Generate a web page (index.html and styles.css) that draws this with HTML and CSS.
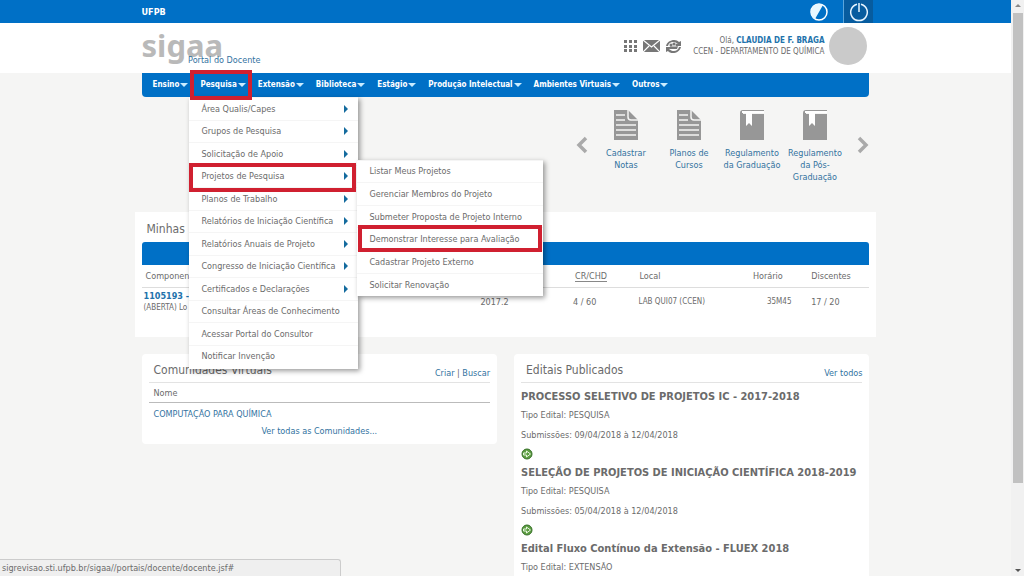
FILE: index.html
```html
<!DOCTYPE html>
<html lang="pt-BR">
<head>
<meta charset="utf-8">
<title>SIGAA - Portal do Docente</title>
<link rel="stylesheet" href="styles.css">
</head>
<body>
<div class="window">
<div class="page">
  <div class="topbar">
    <div class="wrap topbar-inner">
      <strong>UFPB</strong>
      <div class="topbar-actions">
        <button class="contrast" aria-label="Contraste"><svg width="20" height="20" viewBox="0 0 20 20"><circle cx="10" cy="10" r="8" fill="none" stroke="#fff" stroke-width="1.5"/><path d="M14 3A8 8 0 1 0 6 17z" fill="#e8f7ff"/></svg></button>
        <button class="power" aria-label="Sair"><svg width="22" height="22" viewBox="0 0 22 22" fill="none" stroke="#e8f5ff" stroke-width="1.5"><path d="M9 3.2A8.3 8.3 0 1 0 13 3.2M11 2v9"/></svg></button>
      </div>
    </div>
  </div>
  <header class="header">
    <div class="wrap header-inner">
      <div class="brand"><span class="logo">sigaa</span><a href="#" class="portal">Portal do Docente</a></div>
      <div class="user">
        <svg width="14" height="14" viewBox="0 0 14 14" fill="#777"><path d="M0 1h3v3H0zM5 1h3v3H5zM10 1h3v3h-3zM0 6h3v3H0zM5 6h3v3H5zM10 6h3v3h-3zM0 10h3v3H0zM5 10h3v3H5zM10 10h3v3h-3z"/></svg>
        <svg width="17" height="14" viewBox="0 0 17 14"><path d="M0 1h17v12H0z" fill="#777"/><path d="M0 1l8.500 7L17 1M0 13l6-6M17 13l-6-6" fill="none" stroke="#fff" stroke-width="1.200"/></svg>
        <svg width="17" height="15" viewBox="0 0 17 15"><path d="M1 7C2 1 11-1 14 3l2-1v5h-5l2-2C10 2 4 2 3 7zM16 8c-1 6-10 8-13 4l-2 1V8h5l-2 2c3 3 9 3 10-2z" fill="#777"/><circle cx="6" cy="6" r="1.500" fill="#777"/><circle cx="9" cy="5" r="1.600" fill="#777"/><circle cx="12" cy="6" r="1.500" fill="#777"/><path d="M4 10l1-2.500h8L12 10z" fill="#777"/></svg>
        <div class="who"><div>Olá, <strong>CLAUDIA DE F. BRAGA</strong></div><div>CCEN - DEPARTAMENTO DE QUÍMICA</div></div>
        <span class="avatar"></span>
      </div>
    </div>
  </header>
  <div class="wrap">
    <nav class="menu">
      <ul class="menubar">
        <li><a href="#">Ensino</a></li>
        <li class="open"><a href="#">Pesquisa</a><span class="mark mark-top"></span>
          <ul class="drop drop-main">
            <li class="more"><a href="#">Área Qualis/Capes</a></li>
            <li class="more"><a href="#">Grupos de Pesquisa</a></li>
            <li class="more"><a href="#">Solicitação de Apoio</a></li>
            <li class="more"><a href="#">Projetos de Pesquisa</a><span class="mark mark-row"></span>
              <ul class="drop drop-sub">
                <li><a href="#">Listar Meus Projetos</a></li>
                <li><a href="#">Gerenciar Membros do Projeto</a></li>
                <li><a href="#">Submeter Proposta de Projeto Interno</a></li>
                <li><a href="#">Demonstrar Interesse para Avaliação</a><span class="mark mark-sub"></span></li>
                <li><a href="#">Cadastrar Projeto Externo</a></li>
                <li><a href="#">Solicitar Renovação</a></li>
              </ul>
            </li>
            <li class="more"><a href="#">Planos de Trabalho</a></li>
            <li class="more"><a href="#">Relatórios de Iniciação Científica</a></li>
            <li class="more"><a href="#">Relatórios Anuais de Projeto</a></li>
            <li class="more"><a href="#">Congresso de Iniciação Científica</a></li>
            <li class="more"><a href="#">Certificados e Declarações</a></li>
            <li><a href="#">Consultar Áreas de Conhecimento</a></li>
            <li><a href="#">Acessar Portal do Consultor</a></li>
            <li><a href="#">Notificar Invenção</a></li>
          </ul>
        </li>
        <li><a href="#">Extensão</a></li>
        <li><a href="#">Biblioteca</a></li>
        <li><a href="#">Estágio</a></li>
        <li><a href="#">Produção Intelectual</a></li>
        <li><a href="#">Ambientes Virtuais</a></li>
        <li><a href="#">Outros</a></li>
      </ul>
    </nav>
    <div class="shortcuts">
      <button class="arrow arrow-prev" aria-label="Anterior"><svg width="12" height="18" viewBox="0 0 12 18"><path d="M10 2L3 9l7 7" fill="none" stroke="#aaa" stroke-width="3.500"/></svg></button>
      <a href="#"><svg width="26" height="32" viewBox="0 0 26 32"><path d="M1 1h14l10 10v20H1z" fill="#979797"/><path d="M15 1v7q0 3 3 3h7M3 6h9M3 11h9M3 16h20M3 21h20M3 26h20" fill="none" stroke="#f5f5f4" stroke-width="1.500"/></svg>Cadastrar Notas</a>
      <a href="#"><svg width="26" height="32" viewBox="0 0 26 32"><path d="M1 1h14l10 10v20H1z" fill="#979797"/><path d="M15 1v7q0 3 3 3h7M3 6h9M3 11h9M3 16h20M3 21h20M3 26h20" fill="none" stroke="#f5f5f4" stroke-width="1.500"/></svg>Planos de Cursos</a>
      <a href="#"><svg width="26" height="32" viewBox="0 0 26 32"><path d="M1 4q0-3 3-3h21v1H4v3h21v26H1z" fill="#979797"/><path d="M3 2h22v2H3z" fill="#fff"/><path d="M7 3h6v14l-3-3-3 3z" fill="#fff"/></svg>Regulamento da Graduação</a>
      <a href="#"><svg width="26" height="32" viewBox="0 0 26 32"><path d="M1 4q0-3 3-3h21v1H4v3h21v26H1z" fill="#979797"/><path d="M3 2h22v2H3z" fill="#fff"/><path d="M7 3h6v14l-3-3-3 3z" fill="#fff"/></svg>Regulamento da Pós-Graduação</a>
      <button class="arrow arrow-next" aria-label="Próximo"><svg width="12" height="18" viewBox="0 0 12 18"><path d="M2 2l7 7-7 7" fill="none" stroke="#aaa" stroke-width="3.500"/></svg></button>
    </div>
    <section class="classes">
      <h2>Minhas</h2>
      <div class="bluebar"></div>
      <table>
        <thead><tr><th class="c-comp">Componente</th><th class="c-year"></th><th class="c-cr"><span>CR/CHD</span></th><th class="c-local">Local</th><th class="c-time">Horário</th><th class="c-disc">Discentes</th></tr></thead>
        <tbody><tr><td class="comp"><a href="#">1105193 -</a><small>(ABERTA) Lo</small></td><td class="inset">2017.2</td><td>4 / 60</td><td class="tiny">LAB QUI07 (CCEN)</td><td class="tiny time">35M45</td><td>17 / 20</td></tr></tbody>
      </table>
    </section>
    <div class="columns">
      <section class="card communities">
        <div class="card-head"><h2>Comunidades Virtuais</h2><span><a href="#">Criar</a> | <a href="#">Buscar</a></span></div>
        <div class="subhead">Nome</div>
        <a href="#" class="community">COMPUTAÇÃO PARA QUÍMICA</a>
        <a href="#" class="all">Ver todas as Comunidades...</a>
      </section>
      <section class="card notices">
        <div class="card-head"><h2>Editais Publicados</h2><a href="#">Ver todos</a></div>
        <article><h3>PROCESSO SELETIVO DE PROJETOS IC - 2017-2018</h3><p>Tipo Edital: PESQUISA</p><p>Submissões: 09/04/2018 à 12/04/2018</p>
          <a href="#" class="go" aria-label="Abrir"><svg width="12" height="12" viewBox="0 0 12 12"><circle cx="6" cy="6" r="5" fill="#5d9d42" stroke="#356f26"/><path d="M2.500 5h3V3l4 3-4 3V7h-3z" fill="none" stroke="#e6f6dd" stroke-width="1"/></svg></a></article>
        <article><h3>SELEÇÃO DE PROJETOS DE INICIAÇÃO CIENTÍFICA 2018-2019</h3><p>Tipo Edital: PESQUISA</p><p>Submissões: 05/04/2018 à 12/04/2018</p>
          <a href="#" class="go" aria-label="Abrir"><svg width="12" height="12" viewBox="0 0 12 12"><circle cx="6" cy="6" r="5" fill="#5d9d42" stroke="#356f26"/><path d="M2.500 5h3V3l4 3-4 3V7h-3z" fill="none" stroke="#e6f6dd" stroke-width="1"/></svg></a></article>
        <article><h3>Edital Fluxo Contínuo da Extensão - FLUEX 2018</h3><p>Tipo Edital: EXTENSÃO</p></article>
      </section>
    </div>
  </div>
  <div class="status">sigrevisao.sti.ufpb.br/sigaa//portais/docente/docente.jsf#</div>
</div>
<div class="scrollbar"><span class="up"></span><span class="thumb"></span><span class="down"></span></div>
</div>
</body>
</html>
```
FILE: styles.css
```css
* { box-sizing: border-box; }
body { margin: 0; font-family: "DejaVu Sans Condensed", "DejaVu Sans", sans-serif; font-size: 9px; line-height: 12px; color: #6b6b6b; background: #f5f5f4; }
a { color: #33739f; text-decoration: none; }
button { border: 0; background: none; padding: 0; display: flex; align-items: center; justify-content: center; }
ul { list-style: none; margin: 0; padding: 0; }
h2, h3, p { margin: 0; }
h2 { font-weight: normal; font-size: 12px; line-height: 16px; }
svg { display: block; flex: none; }

.window { display: flex; height: 100vh; overflow: hidden; }
.page { flex: 1; position: relative; overflow: hidden; min-width: 0; }
.wrap { width: 72%; margin: 0 auto; }
.topbar { background: #0070c6; color: #fff; }
.topbar-inner { display: flex; justify-content: space-between; align-items: center; height: 23px; }
.topbar-actions { display: flex; align-self: stretch; gap: 14px; margin-right: -4px; }
.power { width: 30px; background: #075c9f; border-left: 1px solid #5aa5dc; }
.header { background: #fff; }
.header-inner { display: flex; justify-content: space-between; height: 50px; }
.brand { display: flex; }
.logo { font-family: "Noto Sans", sans-serif; font-weight: bold; font-size: 31px; line-height: 44px; color: #b9b9b9; }
.portal { margin: 31px 0 0 -35px; }
.user { display: flex; align-items: center; gap: 5px; padding: 0 2px 4px 0; }
.who { text-align: right; line-height: 11px; font-size: 8px; margin-left: 6px; }
.who strong { color: #2272ab; }
.avatar { width: 38px; height: 38px; border-radius: 50%; background: #cacaca; }

.menu { background: #0070c6; border-radius: 0 0 4px 4px; }
.menubar { display: flex; gap: 12px; padding-left: 11px; }
.menubar > li { position: relative; line-height: 24px; }
.menubar > li > a { color: #fff; font-weight: bold; font-size: 8px; display: flex; align-items: center; gap: 1px; }
.menubar > li > a::after { content: ""; border: 4px solid transparent; border-top-color: #c9ecff; border-bottom: 0; }
.drop { position: absolute; z-index: 5; display: grid; background: #fff; box-shadow: 2px 2px 5px #0006; }
.drop li { position: relative; display: flex; align-items: center; padding: 0 12px; border-top: 1px solid #f5f5f5; line-height: 12px; }
.drop a { color: #6b6b6b; white-space: nowrap; }
.drop-main { top: 24px; left: -11px; width: 169px; height: 272px; padding-bottom: 2px; grid-template-rows: repeat(12, 1fr); }
.drop-sub { top: -6px; left: 168px; width: 186px; height: 136px; grid-template-rows: repeat(6, 1fr); }
.more::after { content: ""; position: absolute; right: 10px; border: 4px solid transparent; border-left-color: #146b9e; border-right: 0; }
.mark { position: absolute; border: 4px solid #d02030; pointer-events: none; z-index: 6; }
.mark-top { inset: -3px -6px -3px -10px; }
.mark-row { inset: -3px 2px -5px 0; }
.mark-sub { inset: -3px 1px -2px 1px; }

.shortcuts { display: flex; justify-content: flex-end; align-items: flex-start; height: 115px; padding-top: 12px; text-align: center; }
.shortcuts a { display: flex; flex-direction: column; align-items: center; gap: 6px; width: 63px; }
.arrow { height: 72px; }
.arrow-prev { margin-right: 6px; }
.arrow-next { margin-left: 11px; }

.classes { margin: 0 -7px; padding: 9px 7px 2px; background: #fff; }
.classes h2 { padding-left: 5px; }
.bluebar { height: 23px; margin-top: 5px; background: #0070c6; border-radius: 3px 3px 0 0; }
table { width: 100%; table-layout: fixed; border-collapse: collapse; }
th { font-weight: normal; text-align: left; height: 22px; padding: 0; border-bottom: 1px solid #ddd; }
td { padding: 5px 0 0; vertical-align: top; line-height: 18px; height: 48px; }
.comp { padding: 2px 0 0 2px; line-height: 12px; }
td a { display: block; font-weight: bold; color: #2272ab; }
small { font-size: 8px; display: block; }
.inset { padding-left: 4px; }
.c-comp { width: 46%; padding-left: 4px; }
.c-year { width: 13%; }
.c-cr { width: 9%; padding-left: 4px; }
.c-cr span { border-bottom: 1px solid #888; }
.c-local { width: 16%; padding-left: 3px; }
.c-time { width: 8%; }
td:nth-child(3), td:nth-child(4) { padding-left: 2px; }
.tiny { font-size: 8px; }
.tiny.time { padding-left: 14px; }

.columns { display: grid; grid-template-columns: 355fr 355fr; gap: 17px; align-items: start; margin-top: 17px; }
.card { background: #fff; border-radius: 4px; padding: 8px 7px 7px; }
.card-head { display: flex; justify-content: space-between; align-items: flex-end; padding: 0 0 3px 5px; border-bottom: 1px solid #e3e3e3; min-height: 21px; }
.card-head h2 { align-self: flex-start; }
.subhead { padding: 4px 5px 3px; border-bottom: 1px solid #bbb; }
.community { display: block; padding: 5px 5px 5px; }
.all { display: block; text-align: center; }
h3 { font-size: 11px; line-height: 16px; padding-top: 5px; }
.notices .card-head { margin-bottom: 1px; }
.notices p { line-height: 20px; }
.go { display: block; padding-top: 3px; }

.status { position: absolute; left: 0; bottom: 0; width: 341px; height: 17px; padding: 2px; background: #efefef; border: 1px solid #ccc; border-width: 1px 1px 0 0; border-radius: 0 3px 0 0; z-index: 9; white-space: nowrap; }
.scrollbar { width: 13px; background: #f1f1f1; display: flex; flex-direction: column; align-items: center; justify-content: space-between; padding: 4px 0; }
.up { border: 3px solid transparent; border-bottom-color: #888; border-top: 0; }
.down { border: 3px solid transparent; border-top-color: #555; border-bottom: 0; }
.thumb { flex: 1; width: 10px; margin: 6px 0 86px; background: #c1c1c1; }
```
